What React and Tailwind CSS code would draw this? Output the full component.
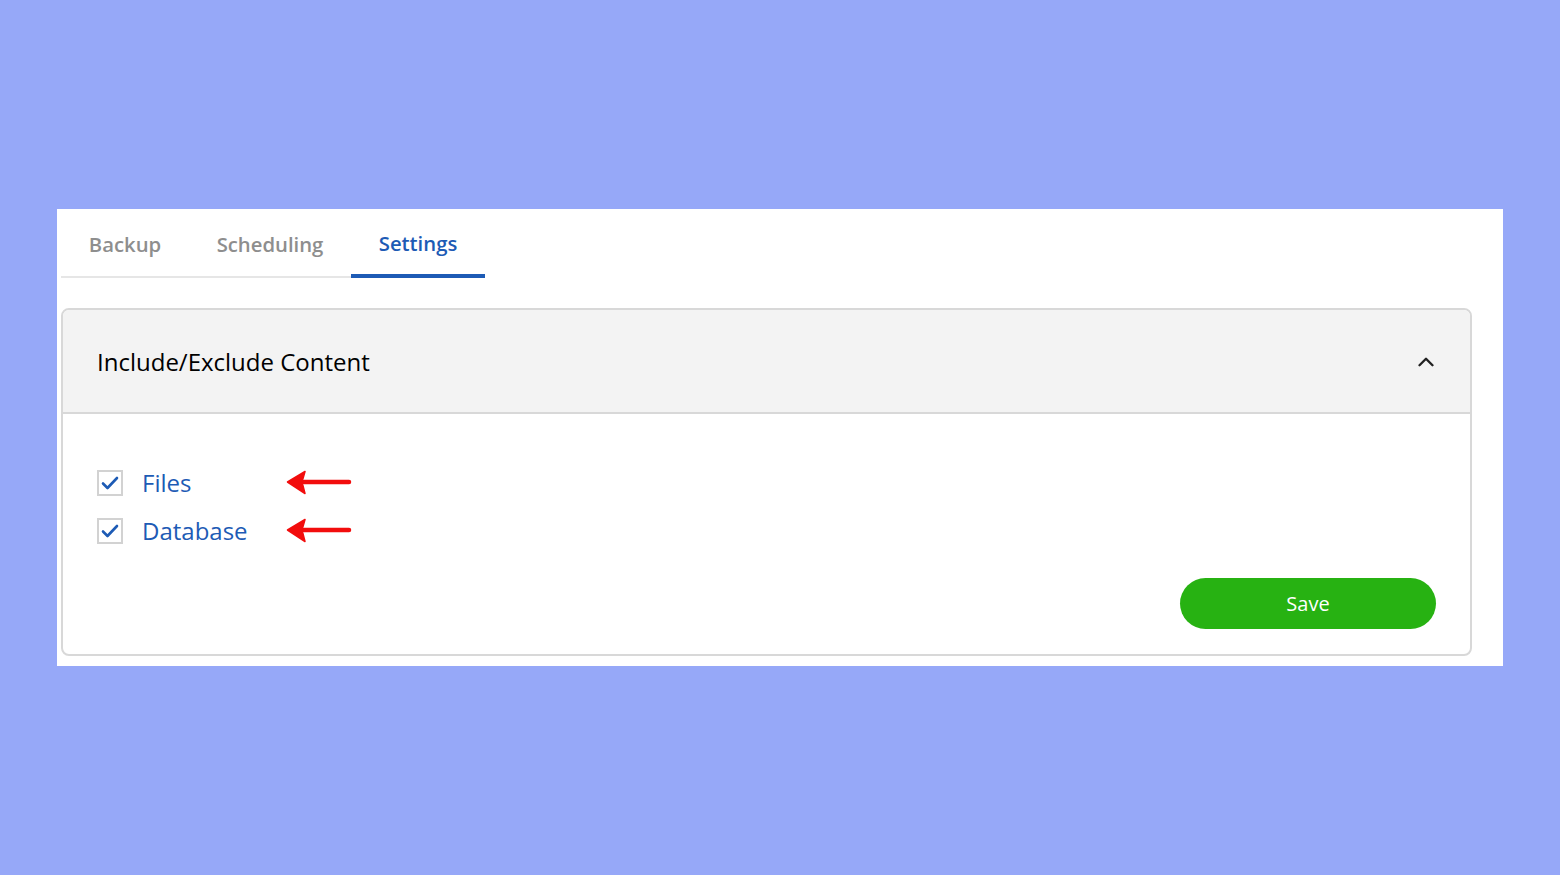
import { ChevronUp } from "lucide-react";

const font = { fontFamily: '"Open Sans", "Liberation Sans", sans-serif' };

function Arrow() {
  return (
    <svg width="66" height="26" viewBox="0 0 66 26" className="ml-[39px]">
      <path d="M63 12 L18 12" stroke="#f20d0d" strokeWidth="4.5" strokeLinecap="round" />
      <path d="M1.5 12 L19 1.5 L16 12 L19 23.5 Z" fill="#f20d0d" stroke="#f20d0d" strokeWidth="1.5" strokeLinejoin="round" />
    </svg>
  );
}

function Checkbox({ label }) {
  return (
    <label className="flex h-[26px] items-center">
      <span className="flex h-[26px] w-[26px] items-center justify-center border-2 border-[#d2d2d2] bg-white">
        <svg width="18" height="16" viewBox="0 0 18 16">
          <path d="M2 8.5 L6.5 13 L16 3" fill="none" stroke="#1d5bb5" strokeWidth="2.6" strokeLinecap="round" strokeLinejoin="round" />
        </svg>
      </span>
      <span className="ml-[19px] w-[105px] text-[24px] leading-[26px] text-[#1d5bb5]">{label}</span>
      <Arrow />
    </label>
  );
}

const tabs = [
  { name: "Backup", w: "w-[128px]" },
  { name: "Scheduling", w: "w-[162px]" },
  { name: "Settings", w: "w-[134px]" },
];

export default function App() {
  return (
    <div className="min-h-[875px] bg-[#96a8f8] pt-[209px]" style={font}>
      <div className="mx-[57px] h-[457px] bg-white pl-1 pr-[31px]">
        <div className="flex">
          {tabs.map((t) => {
            const active = t.name === "Settings";
            return (
              <div
                key={t.name}
                className={
                  active
                    ? `flex h-[69px] items-center justify-center rounded-t-sm border-b-4 border-[#1d5bb5] pt-1 text-[20.3px] font-semibold text-[#1d5bb5] ${t.w}`
                    : `flex h-[69px] items-center justify-center border-b-2 border-[#e6e6e6] pt-[4px] text-[20.3px] font-semibold text-[#8e8e8e] ${t.w}`
                }
              >
                {t.name}
              </div>
            );
          })}
        </div>

        <div className="mt-[30px] overflow-hidden rounded-lg border-2 border-[#d8d8d8]">
          <div className="flex h-[104px] items-center justify-between border-b-2 border-[#d8d8d8] bg-[#f3f3f3] pl-[34px] pr-[31px] pt-[2px]">
            <span className="text-[24px] text-black">Include/Exclude Content</span>
            <ChevronUp size={26} strokeWidth={2.2} className="text-[#222]" />
          </div>
          <div className="px-[34px] pb-[25px] pt-[56px]">
            <div className="flex flex-col gap-[22px]">
              <Checkbox label="Files" />
              <Checkbox label="Database" />
            </div>
            <div className="mt-[34px] flex justify-end">
              <button className="h-[51px] w-[256px] rounded-full bg-[#27b212] text-[20px] text-white">
                Save
              </button>
            </div>
          </div>
        </div>
      </div>
    </div>
  );
}
